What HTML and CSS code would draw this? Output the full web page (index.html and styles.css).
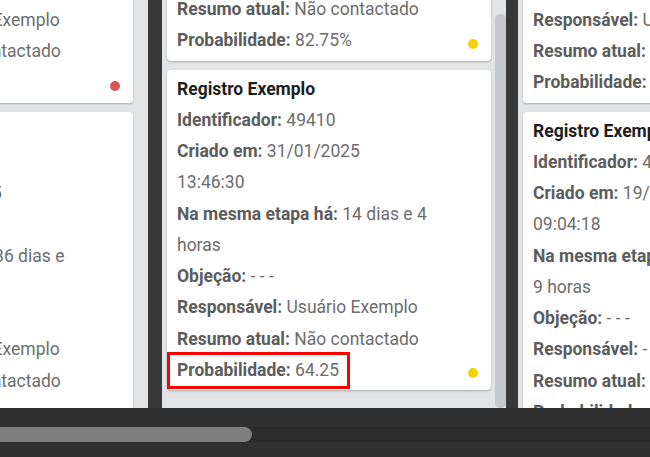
FILE: index.html
```html
<!DOCTYPE html>
<html lang="pt-BR">

<head>
    <meta charset="UTF-8">
    <meta name="viewport" content="width=device-width, initial-scale=1.0">
    <title>Funil de Registros</title>
    <link rel="stylesheet" href="styles.css">
</head>

<body>
    <div class="board">

        <!-- Coluna 1 -->
        <section class="column column-first">
            <div class="cards cards-offset">
                <article class="card">
                    <h3 class="card-title">Registro Exemplo</h3>
                    <p class="field"><b>Identificador:</b> 49871</p>
                    <p class="field"><b>Criado em:</b> 28/01/2025<br>10:12:05</p>
                    <p class="field"><b>Na mesma etapa há:</b> 17 dias e 2&nbsp;horas</p>
                    <p class="field"><b>Objeção:</b> - - -</p>
                    <p class="field"><b>Responsável:</b> Usuário Exemplo</p>
                    <p class="field"><b>Resumo atual:</b> Não contactado</p>
                    <p class="field"><b>Probabilidade:</b> 12.5%</p>
                    <span class="dot dot-red"></span>
                </article>
                <article class="card">
                    <h3 class="card-title">Registro Exemplo</h3>
                    <p class="field"><b>Identificador:</b> 38215</p>
                    <p class="field"><b>Criado em:</b> 05/06/2025<br>16:20:41</p>
                    <p class="field"><b>Na mesma etapa há:</b> 236 dias e 10&nbsp;horas</p>
                    <p class="field"><b>Objeção:</b> - - -</p>
                    <p class="field"><b>Responsável:</b> Usuário Exemplo</p>
                    <p class="field"><b>Resumo atual:</b> Não contactado</p>
                    <p class="field"><b>Probabilidade:</b> 20%</p>
                    <span class="dot dot-red"></span>
                </article>
            </div>
            <div class="scrollbar"></div>
        </section>

        <!-- Coluna 2 -->
        <section class="column column-second">
            <div class="cards cards-offset-mid">
                <article class="card">
                    <h3 class="card-title">Registro Exemplo</h3>
                    <p class="field"><b>Identificador:</b> 49388</p>
                    <p class="field"><b>Criado em:</b> 30/01/2025<br>09:15:12</p>
                    <p class="field"><b>Na mesma etapa há:</b> 15 dias e 8 horas</p>
                    <p class="field"><b>Objeção:</b> - - -</p>
                    <p class="field"><b>Responsável:</b> Usuário Exemplo</p>
                    <p class="field"><b>Resumo atual:</b> Não contactado</p>
                    <p class="field"><b>Probabilidade:</b> 82.75%</p>
                    <span class="dot dot-yellow"></span>
                </article>
                <article class="card">
                    <h3 class="card-title">Registro Exemplo</h3>
                    <p class="field"><b>Identificador:</b> 49410</p>
                    <p class="field"><b>Criado em:</b> 31/01/2025<br>13:46:30</p>
                    <p class="field"><b>Na mesma etapa há:</b> 14 dias e 4 horas</p>
                    <p class="field"><b>Objeção:</b> - - -</p>
                    <p class="field"><b>Responsável:</b> Usuário Exemplo</p>
                    <p class="field"><b>Resumo atual:</b> Não contactado</p>
                    <p class="field field-highlight"><b>Probabilidade:</b> 64.25</p>
                    <span class="dot dot-yellow"></span>
                </article>
            </div>
            <div class="scrollbar">
                <div class="scrollbar-thumb"></div>
            </div>
        </section>

        <!-- Coluna 3 -->
        <section class="column column-third">
            <div class="cards cards-offset">
                <article class="card">
                    <h3 class="card-title">Registro Exemplo</h3>
                    <p class="field"><b>Identificador:</b> 50102</p>
                    <p class="field"><b>Criado em:</b> 03/02/2025<br>11:02:57</p>
                    <p class="field"><b>Na mesma etapa há:</b> 11 dias e 6&nbsp;horas</p>
                    <p class="field"><b>Objeção:</b> - - -</p>
                    <p class="field"><b>Responsável:</b> Usuário Exemplo</p>
                    <p class="field"><b>Resumo atual:</b> Não contactado</p>
                    <p class="field"><b>Probabilidade:</b> 40%</p>
                    <span class="dot dot-yellow"></span>
                </article>
                <article class="card">
                    <h3 class="card-title">Registro Exemplo</h3>
                    <p class="field"><b>Identificador:</b> 48930</p>
                    <p class="field"><b>Criado em:</b> 19/01/2025<br>09:04:18</p>
                    <p class="field"><b>Na mesma etapa há:</b> 26 dias e 9&nbsp;horas</p>
                    <p class="field"><b>Objeção:</b> - - -</p>
                    <p class="field"><b>Responsável:</b> -</p>
                    <p class="field"><b>Resumo atual:</b> Não contactado</p>
                    <p class="field"><b>Probabilidade:</b> 30%</p>
                </article>
            </div>
        </section>
    </div>

    <!-- Barra de rolagem horizontal -->
    <div class="hscroll">
        <div class="hscroll-track">
            <div class="hscroll-thumb"></div>
        </div>
    </div>
</body>

</html>
```

FILE: styles.css
```css
/* General Body Styling */
body {
    margin: 0;
    height: 457px;
    overflow: hidden;
    background-color: #303030;
    font-family: Roboto, 'Noto Sans', sans-serif;
}

.board {
    display: flex;
    height: 408px;
    overflow: hidden;
    background-color: #383838;
}

.column {
    flex: 0 0 344px;
    display: flex;
    overflow: hidden;
    background-color: #e2e4e6;
}

.column-first {
    margin-left: -196px;
    margin-right: 14px;
}

.column-second {
    margin-right: 12px;
}

.cards {
    flex: 1;
    min-width: 0;
    padding: 0 4px 0 5px;
}

/* scroll position of each column */
.cards-offset {
    margin-top: -218px;
}

.cards-offset-mid {
    margin-top: -260px;
}

.scrollbar {
    flex: 0 0 11px;
}

.scrollbar-thumb {
    margin-top: 14px;
    height: 394px;
    border-radius: 5px;
    background-color: #c4c8cb;
}

/* Cards */
.card {
    position: relative;
    background-color: #ffffff;
    padding: 4px 28px 4px 10px;
    margin-bottom: 9px;
    border-radius: 4px;
    box-shadow: 0 1px 2px rgba(0, 0, 0, 0.25);
}

.card-title {
    margin: 0;
    font-size: 17.5px;
    font-weight: 700;
    line-height: 31.25px;
    color: #1e1e1e;
}

.field {
    margin: 0;
    font-size: 17.5px;
    line-height: 31.25px;
    color: #6d6d6d;
}

.field b {
    color: #5c5c5c;
}

.field-highlight {
    width: fit-content;
    margin-left: -7px;
    padding: 0 8px 0 7px;
    outline: 3px solid #ff0000;
}

.dot {
    position: absolute;
    right: 13px;
    bottom: 12px;
    width: 10px;
    height: 10px;
    border-radius: 50%;
}

.dot-red {
    background-color: #e05252;
}

.dot-yellow {
    background-color: #f7d000;
}

/* Horizontal scrollbar */
.hscroll {
    padding-top: 19px;
}

.hscroll-track {
    height: 15px;
    background-color: #2b2b2b;
}

.hscroll-thumb {
    width: 260px;
    height: 15px;
    margin-left: -8px;
    border-radius: 8px;
    background-color: #7e7e7e;
}
```
